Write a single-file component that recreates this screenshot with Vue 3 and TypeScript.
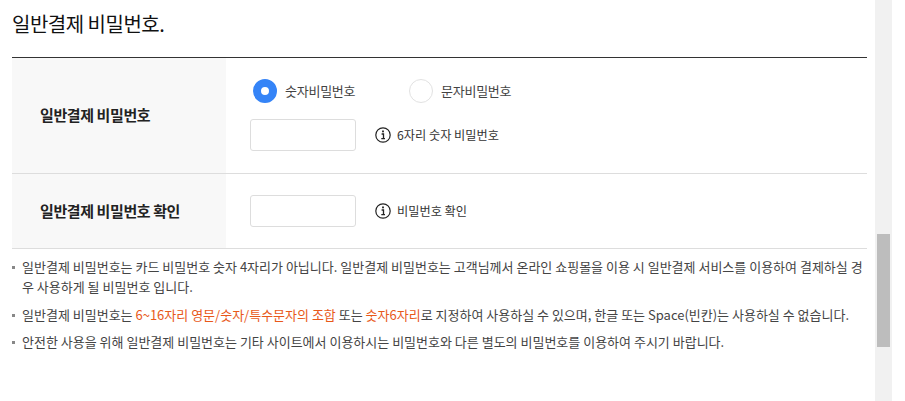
<script setup lang="ts">
interface Row { label: string; hint: string; radios: boolean }
const rows: Row[] = [
  { label: '일반결제 비밀번호', hint: '6자리 숫자 비밀번호', radios: true },
  { label: '일반결제 비밀번호 확인', hint: '비밀번호 확인', radios: false },
]
</script>

<template>
  <div class="page">
    <main class="main">
      <h2 class="title">일반결제 비밀번호.</h2>
      <div class="table">
        <div v-for="r in rows" :key="r.label" class="row" :class="{ tall: r.radios }">
          <div class="head">{{ r.label }}</div>
          <div class="cell">
            <div v-if="r.radios" class="radios">
              <label class="radio"><span class="dot on"></span>숫자비밀번호</label>
              <label class="radio"><span class="dot"></span>문자비밀번호</label>
            </div>
            <div class="field">
              <span class="input"></span>
              <span class="hint">
                <svg class="info" viewBox="0 0 16 16" width="16" height="16">
                  <circle cx="8" cy="8" r="7.2" fill="none" stroke="#222" stroke-width="1.2" />
                  <rect x="7.1" y="3.5" width="1.8" height="1.8" fill="#222" />
                  <path d="M6.6 7h1.9v4.6M6.3 11.6h3.7" fill="none" stroke="#222" stroke-width="1.3" />
                </svg>
                {{ r.hint }}
              </span>
            </div>
          </div>
        </div>
      </div>
      <ul class="notes">
        <li>일반결제 비밀번호는 카드 비밀번호 숫자 4자리가 아닙니다. 일반결제 비밀번호는 고객님께서 온라인 쇼핑몰을 이용 시 일반결제 서비스를 이용하여 결제하실 경우 사용하게 될 비밀번호 입니다.</li>
        <li>일반결제 비밀번호는 <em>6~16자리 영문/숫자/특수문자의 조합</em> 또는 <em>숫자6자리</em>로 지정하여 사용하실 수 있으며, 한글 또는 Space(빈칸)는 사용하실 수 없습니다.</li>
        <li>안전한 사용을 위해 일반결제 비밀번호는 기타 사이트에서 이용하시는 비밀번호와 다른 별도의 비밀번호를 이용하여 주시기 바랍니다.</li>
      </ul>
    </main>
    <div class="track"><div class="thumb"></div></div>
  </div>
</template>

<style scoped>
.page {
  display: flex;
  width: 905px;
  height: 401px;
  overflow: hidden;
  background: #fff;
  font-family: "Noto Sans CJK KR", "Noto Sans", sans-serif;
  color: #333;
}
.main {
  width: 855px;
  margin: 0 8px 0 12px;
  flex: none;
}
.title {
  margin: 0;
  height: 57px;
  padding-top: 9px;
  box-sizing: border-box;
  font-size: 20px;
  line-height: 30px;
  font-weight: 400;
  letter-spacing: -0.5px;
  color: #111;
}
.table {
  border-top: 1px solid #333;
}
.row {
  display: flex;
  height: 75px;
  border-bottom: 1px solid #ddd;
  box-sizing: border-box;
}
.row.tall {
  height: 116px;
}
.head {
  width: 214px;
  flex: none;
  box-sizing: border-box;
  padding: 0 0 2px 28px;
  background: #f8f8f8;
  display: flex;
  align-items: center;
  font-size: 15px;
  letter-spacing: -0.4px;
  font-weight: 700;
  color: #222;
}
.cell {
  padding: 21px 0 0 24px;
}
.radios {
  display: flex;
  height: 24px;
  margin: 0 0 16px 3px;
  gap: 54px;
}
.radio {
  display: flex;
  align-items: center;
  gap: 8px;
  width: 102px;
  white-space: nowrap;
  font-size: 13px;
  line-height: 22px;
  letter-spacing: -0.25px;
  color: #444;
}
.dot {
  width: 24px;
  height: 24px;
  box-sizing: border-box;
  border-radius: 50%;
  border: 1px solid #e2e2e2;
  background: #fff;
  flex: none;
}
.dot.on {
  border: 8px solid #3584f7;
}
.field {
  display: flex;
  align-items: center;
  gap: 19px;
}
.input {
  width: 106px;
  height: 32px;
  box-sizing: border-box;
  border: 1px solid #ddd;
  border-radius: 3px;
  background: #fff;
}
.hint {
  display: flex;
  align-items: center;
  gap: 6px;
  font-size: 12.2px;
  color: #333;
}
.notes {
  list-style: none;
  margin: 0;
  padding: 8px 0 0 10px;
  font-size: 13px;
  line-height: 20px;
  color: #444;
}
.notes li {
  position: relative;
  margin-bottom: 7.5px;
}
.notes li::before {
  content: "";
  position: absolute;
  left: -10px;
  top: 9px;
  width: 3px;
  height: 3px;
  background: #888;
}
.notes em {
  font-style: normal;
  color: #e8591a;
}
.track {
  width: 17px;
  height: 401px;
  flex: none;
  background: #f1f1f1;
  box-sizing: border-box;
  padding: 234px 2px 0;
}
.thumb {
  height: 113px;
  background: #bdbdbd;
}
</style>
